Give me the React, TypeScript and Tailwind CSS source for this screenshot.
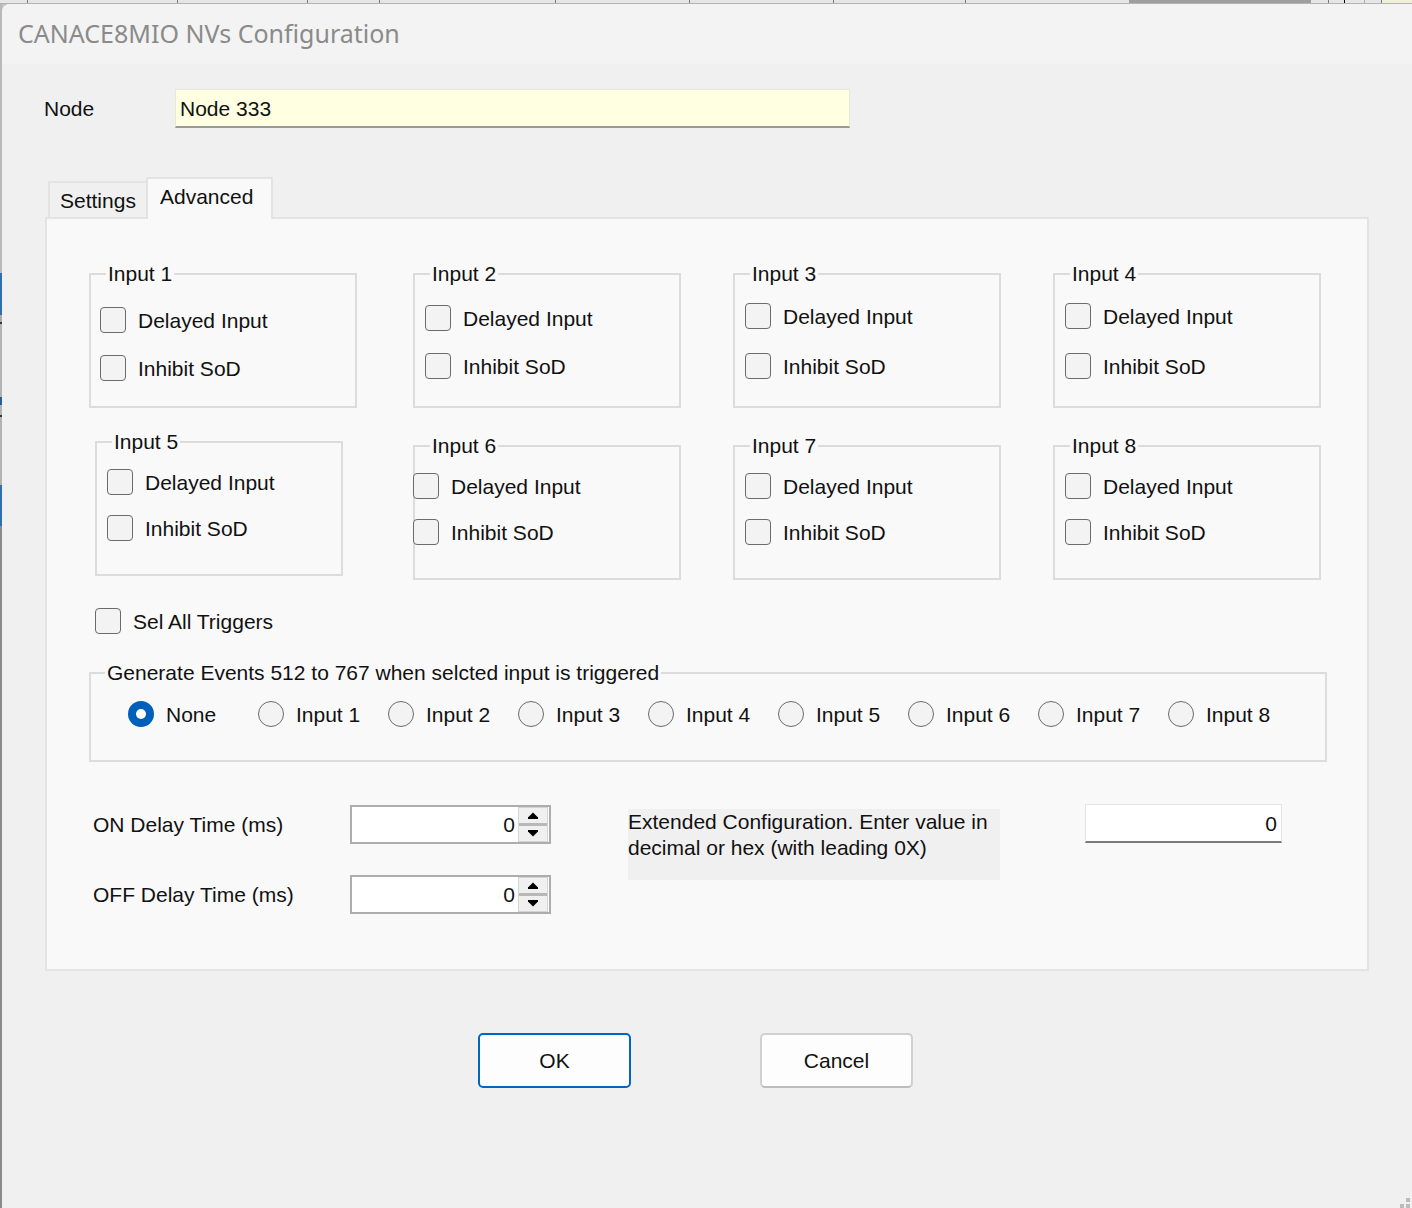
import React from "react";

interface IGroup {
    title: string;
    box: string;
    body: string;
}

const row1: IGroup[] = [
    { title: "Input 1", box: "ml-[42px] w-[268px]", body: "pl-[9px] pt-[32px] gap-[22px]" },
    { title: "Input 2", box: "ml-[56px] w-[268px]", body: "pl-[10px] pt-[30px] gap-[22px]" },
    { title: "Input 3", box: "ml-[52px] w-[268px]", body: "pl-[10px] pt-[28px] gap-[24px]" },
    { title: "Input 4", box: "ml-[52px] w-[268px]", body: "pl-[10px] pt-[28px] gap-[24px]" },
];

const row2: IGroup[] = [
    { title: "Input 5", box: "ml-[48px] w-[248px]", body: "pl-[10px] pt-[26px] gap-[20px]" },
    { title: "Input 6", box: "ml-[70px] mt-[4px] w-[268px]", body: "-ml-[2px] pt-[26px] gap-[20px]" },
    { title: "Input 7", box: "ml-[52px] mt-[4px] w-[268px]", body: "pl-[10px] pt-[26px] gap-[20px]" },
    { title: "Input 8", box: "ml-[52px] mt-[4px] w-[268px]", body: "pl-[10px] pt-[26px] gap-[20px]" },
];

const radios = ["None", "Input 1", "Input 2", "Input 3", "Input 4", "Input 5", "Input 6", "Input 7", "Input 8"];

function CheckBox({ label }: { label: string }) {
    return (
        <div className="flex items-center h-[26px]">
            <span className="w-[26px] h-[26px] shrink-0 rounded-[4px] border-[1.5px] border-[#6b6b6b] bg-[#f3f3f3]" />
            <span className="ml-[12px] text-[21px] leading-none text-[#111] whitespace-nowrap">{label}</span>
        </div>
    );
}

function Radio({ label, checked }: { label: string; checked?: boolean }) {
    return (
        <div className="flex items-center w-[130px] h-[26px]">
            {checked ? (
                <span className="w-[26px] h-[26px] shrink-0 rounded-full bg-[#005fb8] flex items-center justify-center">
                    <span className="w-[10px] h-[10px] rounded-full bg-white" />
                </span>
            ) : (
                <span className="w-[26px] h-[26px] shrink-0 rounded-full border-[1.5px] border-[#6b6b6b] bg-[#f3f3f3]" />
            )}
            <span className="ml-[12px] text-[21px] leading-none text-[#111] whitespace-nowrap">{label}</span>
        </div>
    );
}

function GroupBox({ group }: { group: IGroup }) {
    return (
        <div className={`relative h-[135px] border-2 border-[#dcdcdc] ${group.box}`}>
            <span className="absolute left-[15px] top-0 -translate-y-1/2 -mt-px bg-[#f9f9f9] px-[2px] text-[21px] leading-[22px] text-[#111]">
                {group.title}
            </span>
            <div className={`flex flex-col ${group.body}`}>
                <CheckBox label="Delayed Input" />
                <CheckBox label="Inhibit SoD" />
            </div>
        </div>
    );
}

function Spinner() {
    return (
        <div className="w-[30px] mr-px flex flex-col bg-[#b8b8b8] gap-[3px] border border-[#d4d4d4]">
            <div className="flex-1 bg-[#f0f0f0] flex items-center justify-center">
                <svg width="12" height="9" viewBox="0 0 12 9">
                    <path d="M1.5 6 L6 1.5 L10.5 6 Z" fill="#000" />
                    <rect x="1" y="6" width="10" height="2" fill="#000" />
                </svg>
            </div>
            <div className="flex-1 bg-[#f0f0f0] flex items-center justify-center">
                <svg width="12" height="9" viewBox="0 0 12 9">
                    <rect x="1" y="1" width="10" height="2" fill="#000" />
                    <path d="M1.5 3 L6 7.5 L10.5 3 Z" fill="#000" />
                </svg>
            </div>
        </div>
    );
}

function NumericBox() {
    return (
        <div className="w-[201px] h-[39px] border-2 border-[#adadad] bg-white flex">
            <div className="flex-1 flex items-center justify-end pr-[3px] text-[21px] leading-none text-[#111]">0</div>
            <Spinner />
        </div>
    );
}

export default function App() {
    return (
        <div className="w-[1412px] h-[1208px] flex flex-col bg-[#c4c4c4] overflow-hidden font-['Liberation_Sans',Arial,sans-serif]">
            {/* desktop strip behind the window */}
            <div className="h-[4px] flex bg-[#e6e6e6] border-b border-[#b3b3b3] shrink-0">
                <div className="w-[28px] border-r border-[#7a7a7a]" />
                <div className="w-[150px] border-r border-[#7a7a7a]" />
                <div className="w-[130px] border-r border-[#7a7a7a]" />
                <div className="w-[72px] border-r border-[#7a7a7a]" />
                <div className="w-[176px] border-r border-[#7a7a7a]" />
                <div className="w-[134px] border-r border-[#7a7a7a]" />
                <div className="w-[144px] border-r border-[#7a7a7a]" />
                <div className="w-[132px] border-r border-[#7a7a7a]" />
                <div className="w-[163px]" />
                <div className="w-[182px] bg-[#9e9e9e]" />
                <div className="w-[18px] border-r border-[#7a7a7a]" />
                <div className="w-[16px] border-r border-black" />
                <div className="w-[20px] border-r border-[#b0b0b0]" />
                <div className="w-[17px] border-r border-[#7a7a7a]" />
                <div className="flex-1 bg-[#eef0d8]" />
            </div>

            <div className="flex-1 flex">
                <div className="w-[2px] flex flex-col">
                    <div className="h-[269px] bg-[#b9b9b9]" />
                    <div className="h-[42px] bg-[#2f6eb0]" />
                    <div className="h-[7px] bg-[#a9a9a9]" />
                    <div className="h-[2px] bg-[#333]" />
                    <div className="h-[73px] bg-[#b3b3b3]" />
                    <div className="h-[8px] bg-[#2a5d96]" />
                    <div className="h-[10px] bg-[#b3b3b3]" />
                    <div className="h-[2px] bg-[#333]" />
                    <div className="h-[68px] bg-[#b3b3b3]" />
                    <div className="h-[41px] bg-[#2f6eb0]" />
                    <div className="flex-1 bg-[#8a8a8a]" />
                </div>

                {/* dialog window */}
                <div className="relative flex-1 flex flex-col bg-[#f0f0f0] rounded-tl-[8px] overflow-hidden">
                    <div className="h-[60px] shrink-0 bg-[#f3f3f3] flex items-center pl-[16px] font-['Noto_Sans',sans-serif] text-[25px] text-[#8a8a8a]">
                        CANACE8MIO NVs Configuration
                    </div>

                    <div className="flex flex-col">
                        <div className="mt-[25px] flex items-center">
                            <span className="ml-[42px] w-[131px] text-[21px] leading-none text-[#111]">Node</span>
                            <div className="w-[675px] h-[39px] bg-[#ffffe1] border border-[#e8e8d8] border-b-2 border-b-[#9a9a9a] flex items-center pl-[4px] text-[21px] leading-none text-[#111]">
                                Node 333
                            </div>
                        </div>

                        {/* tabs */}
                        <div className="mt-[49px] ml-[46px] flex items-start -mb-[2px] relative z-10">
                            <div className="mt-[4px] h-[36px] w-[98px] bg-[#f0f0f0] border-2 border-b-0 border-r-0 border-[#e3e3e3] flex items-center pl-[10px] text-[21px] leading-none text-[#111]">
                                Settings
                            </div>
                            <div className="h-[42px] w-[127px] bg-[#f9f9f9] border-2 border-b-0 border-[#e3e3e3] flex items-center pl-[12px] pb-[5px] text-[21px] leading-none text-[#111]">
                                Advanced
                            </div>
                        </div>

                        {/* tab page */}
                        <div className="ml-[43px] w-[1324px] h-[754px] border-2 border-[#e3e3e3] bg-[#f9f9f9] flex flex-col">
                            <div className="mt-[54px] flex items-start">
                                {row1.map((g) => (
                                    <GroupBox key={g.title} group={g} />
                                ))}
                            </div>
                            <div className="mt-[33px] flex items-start">
                                {row2.map((g) => (
                                    <GroupBox key={g.title} group={g} />
                                ))}
                            </div>

                            <div className="mt-[28px] ml-[48px]">
                                <CheckBox label="Sel All Triggers" />
                            </div>

                            <div className="relative mt-[38px] ml-[42px] w-[1238px] h-[90px] border-2 border-[#dcdcdc]">
                                <span className="absolute left-[14px] top-0 -translate-y-1/2 -mt-px bg-[#f9f9f9] px-[2px] text-[21px] leading-[22px] text-[#111] whitespace-nowrap">
                                    Generate Events 512 to 767 when selcted input is triggered
                                </span>
                                <div className="flex pt-[27px] pl-[37px]">
                                    {radios.map((r, i) => (
                                        <Radio key={r} label={r} checked={i === 0} />
                                    ))}
                                </div>
                            </div>

                            <div className="mt-[42px] flex items-start">
                                <div className="mt-px ml-[46px] flex flex-col gap-[31px]">
                                    <div className="flex items-center">
                                        <span className="w-[257px] text-[21px] leading-none text-[#111]">ON Delay Time (ms)</span>
                                        <NumericBox />
                                    </div>
                                    <div className="flex items-center">
                                        <span className="w-[257px] text-[21px] leading-none text-[#111]">OFF Delay Time (ms)</span>
                                        <NumericBox />
                                    </div>
                                </div>
                                <div className="mt-[5px] ml-[77px] w-[372px] h-[71px] bg-[#f0f0f0] text-[21px] leading-[26px] text-[#111]">
                                    Extended Configuration. Enter value in decimal or hex (with leading 0X)
                                </div>
                                <div className="ml-[85px] w-[197px] h-[39px] bg-white border border-[#e5e5e5] border-b-2 border-b-[#7a7a7a] flex items-center justify-end pr-[4px] text-[21px] leading-none text-[#111]">
                                    0
                                </div>
                            </div>
                        </div>

                        <div className="mt-[62px] ml-[476px] flex">
                            <button className="w-[153px] h-[55px] rounded-[5px] border-2 border-[#0067c0] bg-[#fdfdfd] text-[21px] leading-none text-[#111]">
                                OK
                            </button>
                            <button className="ml-[129px] w-[153px] h-[55px] rounded-[5px] border-2 border-[#d0d0d0] border-b-[#bdbdbd] bg-[#fdfdfd] text-[21px] leading-none text-[#111]">
                                Cancel
                            </button>
                        </div>
                    </div>

                    {/* resize grip */}
                    <div className="absolute right-[2px] bottom-0 flex flex-col items-end gap-[2px]">
                        <span className="w-[4px] h-[4px] bg-[#bcbcbc]" />
                        <div className="flex gap-[2px]">
                            <span className="w-[4px] h-[4px] bg-[#bcbcbc]" />
                            <span className="w-[4px] h-[4px] bg-[#bcbcbc]" />
                        </div>
                    </div>
                </div>
            </div>
        </div>
    );
}
